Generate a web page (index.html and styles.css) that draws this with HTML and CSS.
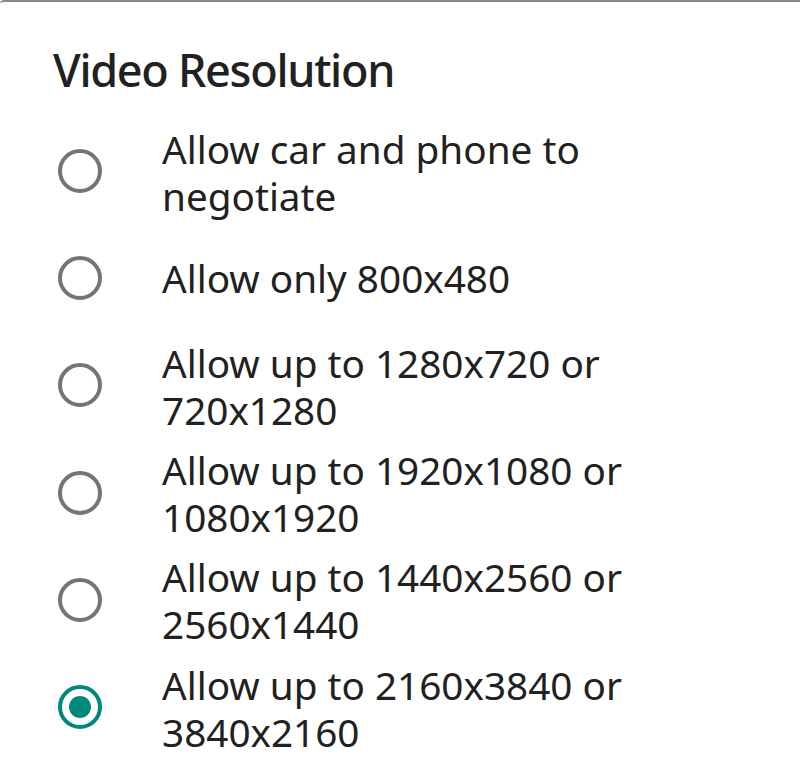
FILE: index.html
```html
<!DOCTYPE html>
<html lang="en">
<head>
<meta charset="utf-8">
<title>Video Resolution</title>
<link rel="stylesheet" href="styles.css">
</head>
<body>
<div class="dialog">
  <h1 class="title">Video Resolution</h1>
  <ul class="options">
    <li class="option"><span class="radio"></span><span class="label two">Allow car and phone to negotiate</span></li>
    <li class="option"><span class="radio"></span><span class="label">Allow only 800x480</span></li>
    <li class="option"><span class="radio"></span><span class="label two">Allow up to 1280x720 or 720x1280</span></li>
    <li class="option"><span class="radio"></span><span class="label two">Allow up to 1920x1080 or 1080x1920</span></li>
    <li class="option"><span class="radio"></span><span class="label two">Allow up to 1440x2560 or 2560x1440</span></li>
    <li class="option"><span class="radio checked"></span><span class="label two">Allow up to 2160x3840 or 3840x2160</span></li>
  </ul>
</div>
</body>
</html>
```
FILE: styles.css
```css
html, body {
  margin: 0;
  padding: 0;
  background: #ffffff;
}
body {
  font-family: "Noto Sans", "Open Sans", sans-serif;
  color: #212121;
}
.dialog {
  width: 800px;
  height: 778px;
  box-sizing: border-box;
  border-top: 2px solid #8a8a8a;
  border-top-left-radius: 4px;
  background: #ffffff;
  overflow: hidden;
}
.title {
  margin: 40px 0 19.5px 53px;
  font-size: 45px;
  line-height: 56px;
  font-weight: 500;
  letter-spacing: -1.3px;
  color: #212121;
}
.options {
  list-style: none;
  margin: 0;
  padding: 0;
}
.option {
  display: flex;
  align-items: center;
  height: 107.2px;
  padding-left: 58px;
  gap: 60px;
}
.radio {
  flex: none;
  width: 44px;
  height: 44px;
  box-sizing: border-box;
  border: 4.5px solid #757575;
  border-radius: 50%;
  display: flex;
  align-items: center;
  justify-content: center;
}
.radio.checked {
  border-color: #00897b;
}
.radio.checked::after {
  content: "";
  width: 22px;
  height: 22px;
  border-radius: 50%;
  background: #00897b;
}
.label {
  width: 480px;
  font-size: 38.7px;
  line-height: 47px;
  color: #212121;
}
.label.two {
  padding-top: 3px;
}
```
